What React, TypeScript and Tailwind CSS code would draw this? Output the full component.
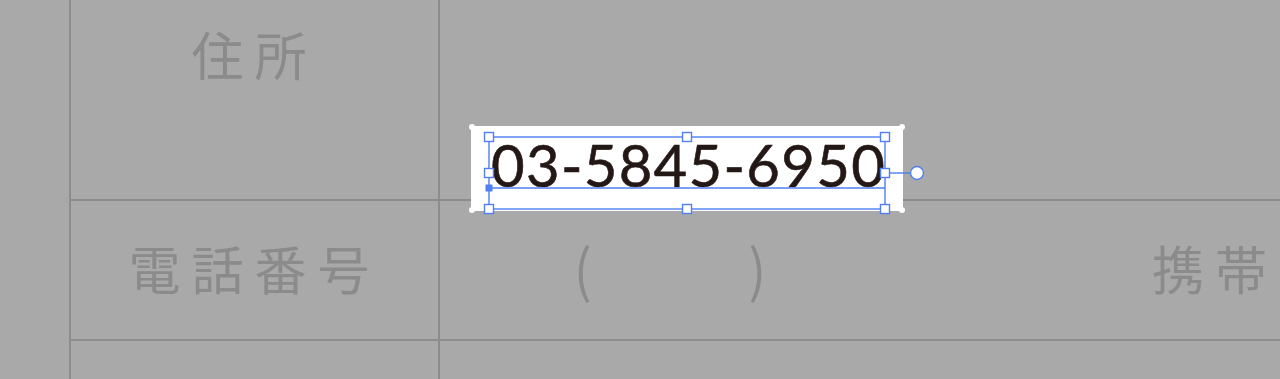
import React from 'react';

const jp = { fontFamily: '"Noto Sans CJK JP", sans-serif' };

const Handle = ({ x, y }: { x: number; y: number }) => (
    <rect x={x - 4.5} y={y - 4.5} width={9} height={9} fill="#fff" stroke="#4f7ff2" strokeWidth={1.4} />
);

export default function App() {
    const handles = [
        [489, 137], [687, 137], [885, 137],
        [489, 173], [885, 173],
        [489, 209], [687, 209], [885, 209],
    ];

    return (
        <div className="relative w-[1280px] h-[379px] overflow-hidden bg-[#a9a9a9]" style={jp}>
            <div className="grid grid-cols-[69px_369px_1fr] grid-rows-[199px_140px_1fr] h-full text-[#8b8b8b]">
                {/* row 1 */}
                <div />
                <div className="border-l-2 border-[#8c8c8c] flex justify-center pt-[28px]">
                    <span className="text-[52px] leading-none tracking-[11px]">住所</span>
                </div>
                <div className="border-l-2 border-[#8c8c8c]" />

                {/* row 2 */}
                <div />
                <div className="border-l-2 border-t-2 border-[#8c8c8c] flex items-center justify-center">
                    <span className="text-[52px] leading-none tracking-[11px] -mt-[4px]">電話番号</span>
                </div>
                <div className="border-l-2 border-t-2 border-[#8c8c8c] flex items-center pl-[134px] pr-[13px] text-[52px] leading-none">
                    <span className="-mt-[4px] scale-y-110">(</span>
                    <span className="ml-[157px] -mt-[4px] scale-y-110">)</span>
                    <span className="ml-auto tracking-[11px] -mr-[11px] -mt-[4px]">携帯</span>
                </div>

                {/* row 3 */}
                <div />
                <div className="border-l-2 border-t-2 border-[#8c8c8c]" />
                <div className="border-l-2 border-t-2 border-[#8c8c8c]" />
            </div>

            {/* selected text object */}
            <div className="absolute left-[471px] top-[126px] w-[432px] h-[85px] bg-white rounded-[2px] flex pl-[20px] pt-[10px]">
                <span
                    className="text-[58px] leading-none text-[#231815] tracking-[1.3px]"
                    style={{ fontFamily: 'Lato, sans-serif', WebkitTextStroke: '0.6px #231815' }}
                >
                    03-5845-6950
                </span>
            </div>

            <svg className="absolute inset-0 pointer-events-none" width={1280} height={379}>
                <circle cx={472} cy={127} r={3} fill="#fff" />
                <circle cx={902} cy={127} r={3} fill="#fff" />
                <circle cx={472} cy={210} r={3} fill="#fff" />
                <circle cx={902} cy={210} r={3} fill="#fff" />
                <rect x={489} y={137} width={396} height={72} fill="none" stroke="#4f7ff2" strokeWidth={1.4} />
                <line x1={489} y1={188} x2={885} y2={188} stroke="#4f7ff2" strokeWidth={1.4} />
                <line x1={885} y1={173} x2={910} y2={173} stroke="#4f7ff2" strokeWidth={1.4} />
                <circle cx={917} cy={173} r={6.5} fill="#fff" stroke="#4f7ff2" strokeWidth={1.4} />
                <rect x={485.5} y={184.5} width={7} height={7} fill="#4f7ff2" />
                {handles.map(([x, y]) => (
                    <Handle key={`${x}-${y}`} x={x} y={y} />
                ))}
            </svg>
        </div>
    );
}
